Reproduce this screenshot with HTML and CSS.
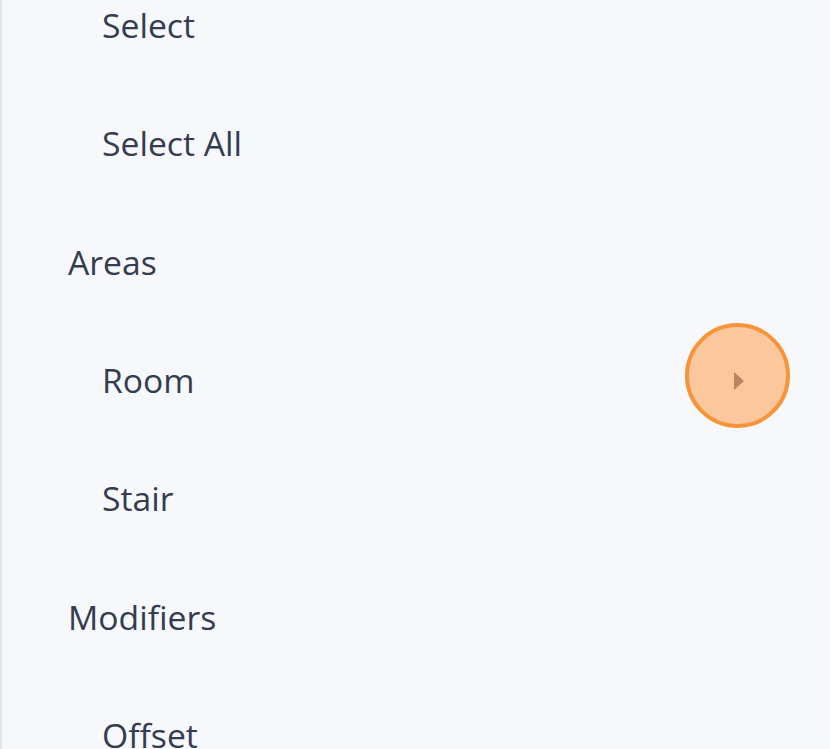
FILE: index.html
```html
<!DOCTYPE html>
<html>
<head>
<meta charset="utf-8">
<link rel="stylesheet" href="styles.css">
</head>
<body>
<div class="panel">
  <ul class="menu">
    <li class="item sub">Select</li>
    <li class="item sub">Select All</li>
    <li class="item group">Areas</li>
    <li class="item sub">Room
      <span class="cursor"><svg class="arrow" width="10" height="18" viewBox="0 0 10 18"><path d="M0 0 L10 9 L0 18 Z" fill="#b98566"/></svg></span>
    </li>
    <li class="item sub">Stair</li>
    <li class="item group">Modifiers</li>
    <li class="item sub">Offset</li>
  </ul>
</div>
</body>
</html>
```
FILE: styles.css
```css
html, body {
  margin: 0;
  padding: 0;
  background: #f7f8fc;
  overflow: hidden;
  height: 749px;
}
.panel {
  height: 749px;
  overflow: hidden;
  border-left: 2px solid #e3e5ea;
  background: #f7f8fc;
  font-family: "Open Sans", "Noto Sans", sans-serif;
  color: #343c4f;
}
.menu {
  list-style: none;
  margin: 0;
  padding: 0;
  position: relative;
  top: -34px;
}
.item {
  height: 118.33px;
  display: flex;
  align-items: center;
  font-size: 33.7px;
  position: relative;
}
.sub { padding-left: 100px; }
.group { padding-left: 66px; }
.cursor {
  position: absolute;
  left: 683px;
  top: 50%;
  margin-top: -57px;
  width: 97px;
  height: 97px;
  border-radius: 50%;
  border: 4px solid #f7943a;
  background: #fbc79c;
  display: flex;
  align-items: center;
  justify-content: center;
}
.arrow {
  margin-left: 2px;
  margin-top: 10px;
}
```
